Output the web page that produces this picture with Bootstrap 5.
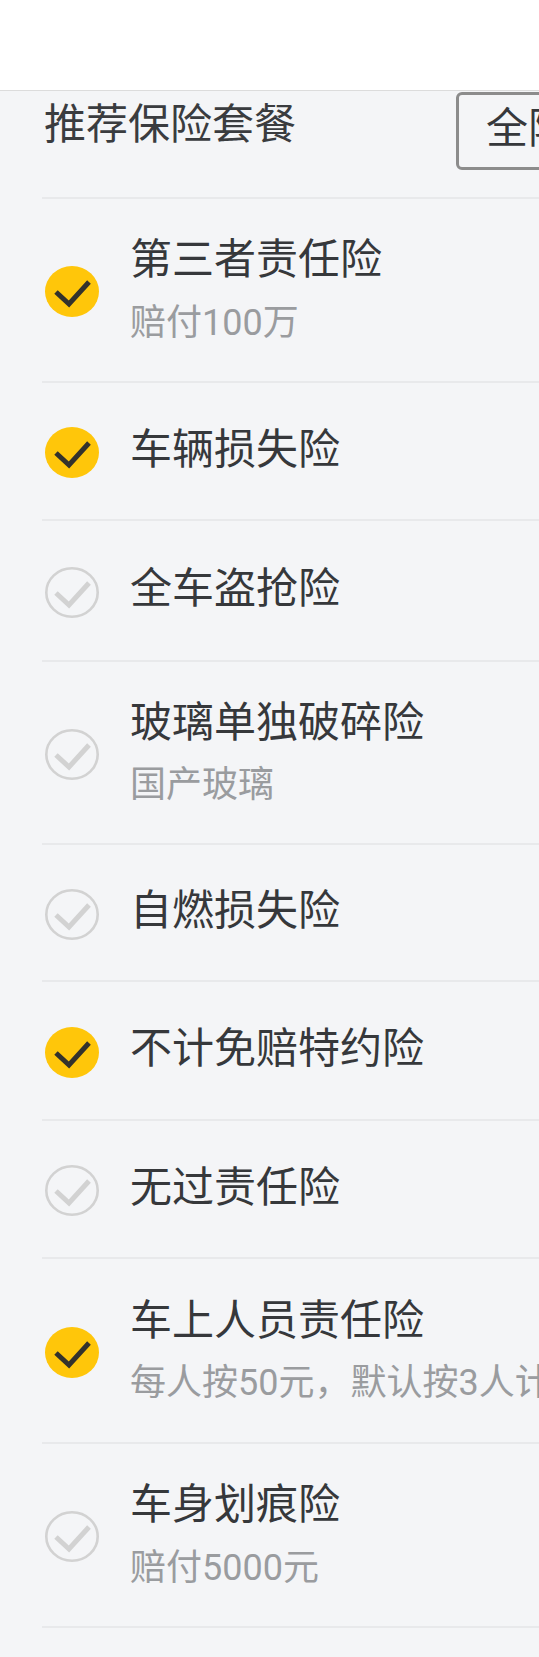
<!DOCTYPE html>
<html lang="zh">
<head>
<meta charset="utf-8">
<meta name="viewport" content="width=device-width, initial-scale=1">
<link href="https://cdn.jsdelivr.net/npm/bootstrap@5.3.0/dist/css/bootstrap.min.css" rel="stylesheet">
<style>
html,body{height:100%;overflow:hidden;}
body{background:#f4f5f7;font-family:Roboto,"Noto Sans CJK SC",sans-serif;color:#333538;width:539px;}
.topbar{height:91px;background:#fff;border-bottom:1px solid #dcdcdc;}
.planhead{height:106px;padding-left:44px;}
.plantitle{font-size:42px;line-height:1;margin-top:13px;white-space:nowrap;color:#3a3c3f;}
.allbtn{flex:none;margin-left:160px;margin-top:1px;width:160px;height:78px;border:3px solid #8c8c8c;border-radius:6px;background:transparent;font-size:42px;line-height:1;color:#36383b;padding:0 0 4px 27px;text-align:left;white-space:nowrap;}
.inslist{margin-left:42px;}
.insrow{border-top:2px solid #e8e9eb;white-space:nowrap;}
.h184{height:184px}.h183{height:183px}.h185{height:185px}.h137{height:137px}.h138{height:138px}.h139{height:139px}.h141{height:141px}.hend{height:30px}
.tick{flex:none;width:54px;height:51px;margin-left:3px;margin-right:31px;margin-top:3px;}
.insone{padding-bottom:2px;}
.institle{font-size:42px;line-height:1.2;color:#36383b;}
.inssub{font-size:36px;line-height:1.2;color:#9a9c9f;margin-top:16px;}
</style>
</head>
<body>
<div class="topbar"></div>
<div class="planhead d-flex overflow-hidden">
  <div class="plantitle">推荐保险套餐</div>
  <button type="button" class="allbtn">全险</button>
</div>
<div class="inslist">
  <div class="insrow h184 d-flex align-items-center"><svg class="tick" viewBox="0 0 54 51"><ellipse cx="27" cy="25.5" rx="27" ry="25.5" fill="#ffc60a"/><path d="M11 26 24 38 44 16" fill="none" stroke="#33322c" stroke-width="5"/></svg><div><div class="institle">第三者责任险</div><div class="inssub">赔付100万</div></div></div>
  <div class="insrow h138 d-flex align-items-center"><svg class="tick" viewBox="0 0 54 51"><ellipse cx="27" cy="25.5" rx="27" ry="25.5" fill="#ffc60a"/><path d="M11 26 24 38 44 16" fill="none" stroke="#33322c" stroke-width="5"/></svg><div class="insone"><div class="institle">车辆损失险</div></div></div>
  <div class="insrow h141 d-flex align-items-center"><svg class="tick" viewBox="0 0 54 51"><ellipse cx="27" cy="25.5" rx="25.7" ry="24.2" fill="none" stroke="#d2d2d2" stroke-width="2.6"/><path d="M11 26 24 38 44 16" fill="none" stroke="#d2d2d2" stroke-width="5"/></svg><div class="insone"><div class="institle">全车盗抢险</div></div></div>
  <div class="insrow h183 d-flex align-items-center"><svg class="tick" viewBox="0 0 54 51"><ellipse cx="27" cy="25.5" rx="25.7" ry="24.2" fill="none" stroke="#d2d2d2" stroke-width="2.6"/><path d="M11 26 24 38 44 16" fill="none" stroke="#d2d2d2" stroke-width="5"/></svg><div><div class="institle">玻璃单独破碎险</div><div class="inssub">国产玻璃</div></div></div>
  <div class="insrow h137 d-flex align-items-center"><svg class="tick" viewBox="0 0 54 51"><ellipse cx="27" cy="25.5" rx="25.7" ry="24.2" fill="none" stroke="#d2d2d2" stroke-width="2.6"/><path d="M11 26 24 38 44 16" fill="none" stroke="#d2d2d2" stroke-width="5"/></svg><div class="insone"><div class="institle">自燃损失险</div></div></div>
  <div class="insrow h139 d-flex align-items-center"><svg class="tick" viewBox="0 0 54 51"><ellipse cx="27" cy="25.5" rx="27" ry="25.5" fill="#ffc60a"/><path d="M11 26 24 38 44 16" fill="none" stroke="#33322c" stroke-width="5"/></svg><div class="insone"><div class="institle">不计免赔特约险</div></div></div>
  <div class="insrow h138 d-flex align-items-center"><svg class="tick" viewBox="0 0 54 51"><ellipse cx="27" cy="25.5" rx="25.7" ry="24.2" fill="none" stroke="#d2d2d2" stroke-width="2.6"/><path d="M11 26 24 38 44 16" fill="none" stroke="#d2d2d2" stroke-width="5"/></svg><div class="insone"><div class="institle">无过责任险</div></div></div>
  <div class="insrow h185 d-flex align-items-center"><svg class="tick" viewBox="0 0 54 51"><ellipse cx="27" cy="25.5" rx="27" ry="25.5" fill="#ffc60a"/><path d="M11 26 24 38 44 16" fill="none" stroke="#33322c" stroke-width="5"/></svg><div><div class="institle">车上人员责任险</div><div class="inssub">每人按50元，默认按3人计算</div></div></div>
  <div class="insrow h184 d-flex align-items-center"><svg class="tick" viewBox="0 0 54 51"><ellipse cx="27" cy="25.5" rx="25.7" ry="24.2" fill="none" stroke="#d2d2d2" stroke-width="2.6"/><path d="M11 26 24 38 44 16" fill="none" stroke="#d2d2d2" stroke-width="5"/></svg><div><div class="institle">车身划痕险</div><div class="inssub">赔付5000元</div></div></div>
  <div class="insrow hend"></div>
</div>
<script src="https://cdn.jsdelivr.net/npm/bootstrap@5.3.0/dist/js/bootstrap.bundle.min.js"></script>
</body>
</html>
